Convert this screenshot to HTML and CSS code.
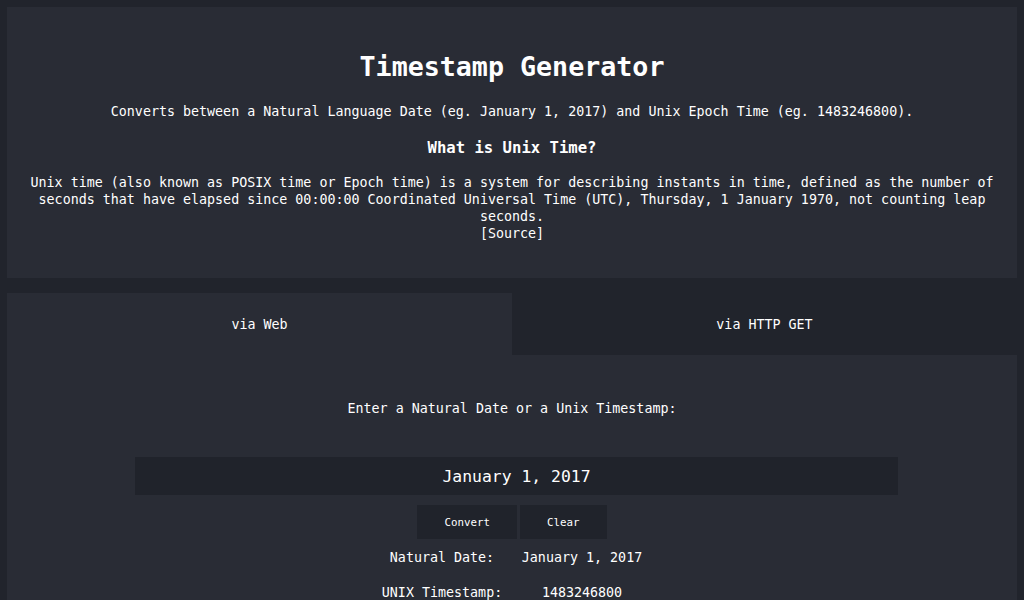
FILE: index.html
```html
<!DOCTYPE html>
<html lang="en">
<head>
<meta charset="utf-8">
<title>Timestamp Generator</title>
<link rel="stylesheet" href="styles.css">
</head>
<body>
  <header class="card intro">
    <h1 class="title">Timestamp Generator</h1>
    <p class="lead">Converts between a Natural Language Date (eg. January 1, 2017) and Unix Epoch Time (eg. 1483246800).</p>
    <h3 class="subtitle">What is Unix Time?</h3>
    <p class="desc">Unix time (also known as POSIX time or Epoch time) is a system for describing instants in time, defined as the number of seconds that have elapsed since 00:00:00 Coordinated Universal Time (UTC), Thursday, 1 January 1970, not counting leap seconds.<br><a class="source" href="#">[Source]</a></p>
  </header>

  <section class="converter">
    <nav class="tabs">
      <div class="tab active">via Web</div>
      <div class="tab">via HTTP GET</div>
    </nav>
    <div class="panel">
      <p class="prompt">Enter a Natural Date or a Unix Timestamp:</p>
      <input class="date-input" type="text" value="January 1, 2017">
      <div class="actions">
        <button class="btn">Convert</button>
        <button class="btn">Clear</button>
      </div>
      <div class="results">
        <div class="cell">Natural Date:</div>
        <div class="cell">January 1, 2017</div>
        <div class="cell">UNIX Timestamp:</div>
        <div class="cell">1483246800</div>
      </div>
    </div>
  </section>
</body>
</html>
```

FILE: styles.css
```css
html, body {
  margin: 0;
  padding: 0;
}

body {
  padding: 7px;
  background: #21242c;
  color: #ffffff;
  font-family: "DejaVu Sans Mono", "Liberation Mono", monospace;
  font-size: 13.33px;
  line-height: 17px;
}

.card {
  background: #292c35;
}

.intro {
  padding: 44px 20px 36px;
  text-align: center;
}

.title {
  margin: 0;
  font-size: 26.67px;
  line-height: 32px;
  font-weight: bold;
}

.lead {
  margin: 20px 0 0;
}

.subtitle {
  margin: 19px 0 0;
  font-size: 15.6px;
  line-height: 19px;
  font-weight: bold;
}

.desc {
  margin: 16px 0 0;
}

.source {
  color: #ffffff;
  text-decoration: none;
}

.converter {
  margin-top: 15px;
}

.tabs {
  display: flex;
}

.tab {
  flex: 1;
  height: 62px;
  display: flex;
  align-items: center;
  justify-content: center;
  background: #21242c;
}

.tab.active {
  background: #292c35;
}

.panel {
  background: #292c35;
  padding: 45px 0 40px;
  text-align: center;
}

.prompt {
  margin: 0;
}

.date-input {
  display: block;
  box-sizing: border-box;
  width: 763px;
  height: 38px;
  margin: 40px 0 0 128px;
  padding: 0;
  border: none;
  outline: none;
  background: #20232b;
  color: #ffffff;
  font-family: "DejaVu Sans Mono", "Liberation Mono", monospace;
  font-size: 16.4px;
  text-align: center;
}

.actions {
  display: flex;
  justify-content: center;
  gap: 3px;
  margin-top: 10px;
}

.btn {
  height: 34px;
  padding: 0 27px;
  border: none;
  background: #20232b;
  color: #ffffff;
  font-family: "DejaVu Sans Mono", "Liberation Mono", monospace;
  font-size: 10.8px;
}

.results {
  display: grid;
  grid-template-columns: 140px 140px;
  grid-auto-rows: 35px;
  justify-content: center;
  margin-top: 1px;
}

.cell {
  display: flex;
  align-items: center;
  justify-content: center;
  white-space: nowrap;
}
```
